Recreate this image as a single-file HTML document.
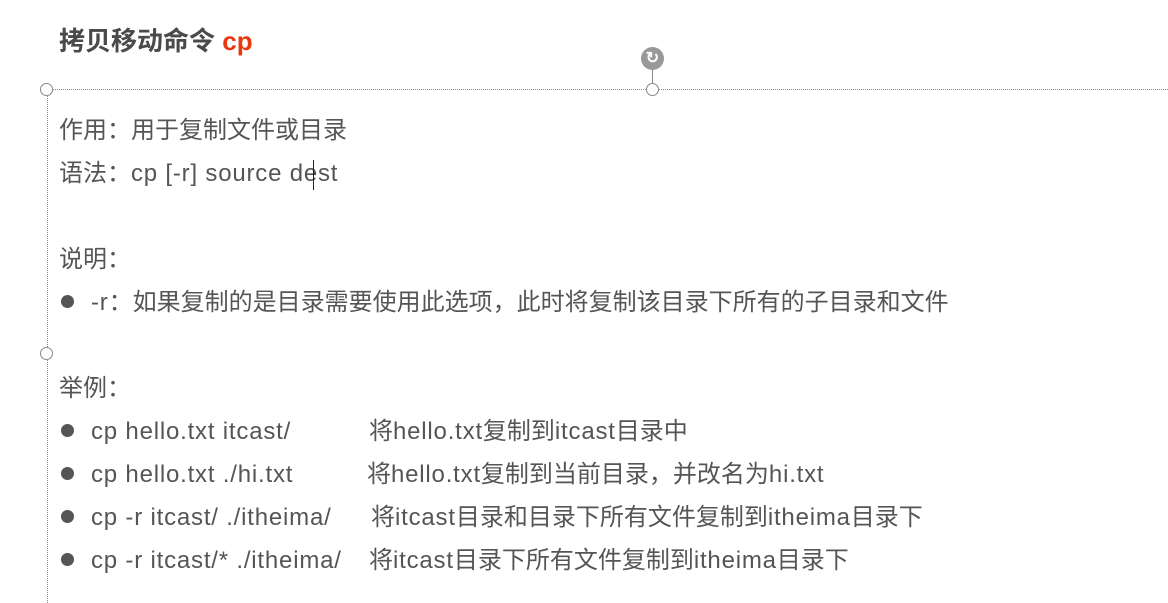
<!DOCTYPE html>
<html><head><meta charset="utf-8"><style>
body{margin:0;width:1168px;height:603px;background:#fff;position:relative;overflow:hidden;font-family:"Liberation Sans","Noto Sans CJK SC",sans-serif;color:#555;}
.t{position:absolute;font-size:24px;line-height:30px;white-space:nowrap;}
.l{letter-spacing:0.8px}
.b{position:absolute;width:13px;height:13px;border-radius:50%;background:#555;left:61px;}
.h{position:absolute;width:11px;height:11px;border:1px solid #888;border-radius:50%;background:#fff;}
</style></head><body>
<div class="t" style="left:59px;top:26px;font-size:26px;font-weight:bold;color:#4a4a4a">拷贝移动命令 <span style="color:#e8380d">cp</span></div>
<div style="position:absolute;left:46px;top:89px;width:1122px;border-top:1px dotted #888"></div>
<div style="position:absolute;left:47px;top:89px;height:514px;border-left:1px dotted #888"></div>
<div style="position:absolute;left:652px;top:62px;height:27px;border-left:1px solid #888"></div>
<div style="position:absolute;left:641px;top:47px;width:23px;height:23px;border-radius:50%;background:#999;color:#fff;font-size:16px;line-height:23px;text-align:center;font-weight:bold">↻</div>
<div class="h" style="left:40px;top:83px"></div>
<div class="h" style="left:646px;top:83px"></div>
<div class="h" style="left:40px;top:347px"></div>
<div class="t" style="left:59px;top:116px">作用：用于复制文件或目录</div>
<div class="t" style="left:59px;top:159px">语法：<span class="l">cp [-r] source dest</span></div>
<div style="position:absolute;left:313px;top:160px;height:30px;border-left:1px solid #222"></div>
<div class="t" style="left:59px;top:245px">说明：</div>
<div class="b" style="top:295px"></div>
<div class="t" style="left:91px;top:288px"><span class="l">-r</span>：如果复制的是目录需要使用此选项，此时将复制该目录下所有的子目录和文件</div>
<div class="t" style="left:59px;top:374px">举例：</div>
<div class="b" style="top:424px"></div>
<div class="t l" style="left:91px;top:417px">cp hello.txt itcast/</div>
<div class="t" style="left:369px;top:417px">将<span class="l">hello.txt</span>复制到<span class="l">itcast</span>目录中</div>
<div class="b" style="top:467px"></div>
<div class="t l" style="left:91px;top:460px">cp hello.txt ./hi.txt</div>
<div class="t" style="left:367px;top:460px">将<span class="l">hello.txt</span>复制到当前目录，并改名为<span class="l">hi.txt</span></div>
<div class="b" style="top:510px"></div>
<div class="t l" style="left:91px;top:503px">cp -r itcast/ ./itheima/</div>
<div class="t" style="left:371px;top:503px">将<span class="l">itcast</span>目录和目录下所有文件复制到<span class="l">itheima</span>目录下</div>
<div class="b" style="top:553px"></div>
<div class="t l" style="left:91px;top:546px">cp -r itcast/* ./itheima/</div>
<div class="t" style="left:369px;top:546px">将<span class="l">itcast</span>目录下所有文件复制到<span class="l">itheima</span>目录下</div>
</body></html>
